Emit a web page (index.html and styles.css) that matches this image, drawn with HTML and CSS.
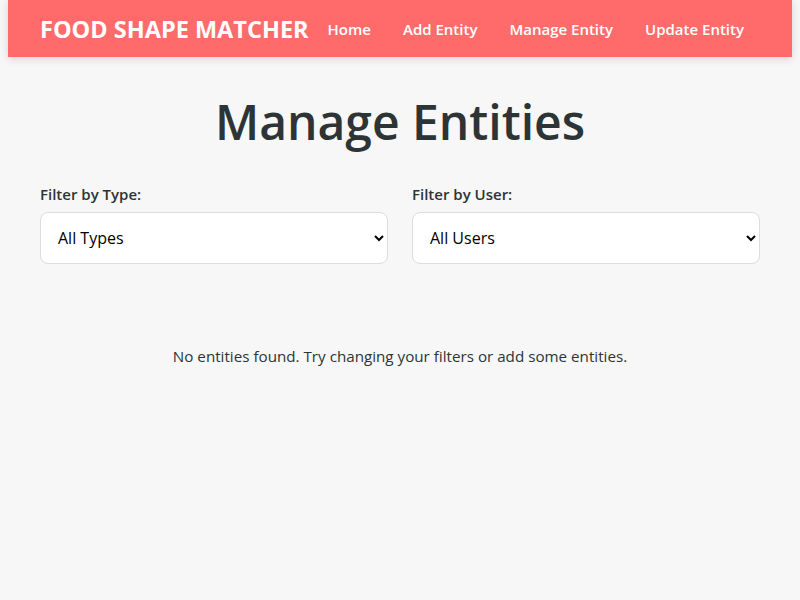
FILE: index.html
```html
<!DOCTYPE html>
<html lang="en">
<head>
<meta charset="utf-8">
<title>Food Shape Matcher</title>
<link rel="stylesheet" href="styles.css">
</head>
<body>
<div class="page">
  <header class="topbar">
    <div class="logo">FOOD SHAPE MATCHER</div>
    <nav class="nav">
      <a href="#" class="nav-link">Home</a>
      <a href="#" class="nav-link">Add Entity</a>
      <a href="#" class="nav-link">Manage Entity</a>
      <a href="#" class="nav-link">Update Entity</a>
    </nav>
  </header>
  <main class="content">
    <h1 class="title">Manage Entities</h1>
    <div class="filters">
      <div class="filter">
        <label class="filter-label" for="type">Filter by Type:</label>
        <select id="type" class="filter-select">
          <option>All Types</option>
        </select>
      </div>
      <div class="filter">
        <label class="filter-label" for="user">Filter by User:</label>
        <select id="user" class="filter-select">
          <option>All Users</option>
        </select>
      </div>
    </div>
    <p class="empty">No entities found. Try changing your filters or add some entities.</p>
  </main>
</div>
</body>
</html>
```
FILE: styles.css
```css
html, body {
  margin: 0;
  padding: 0;
  background: #f7f7f7;
}
body {
  font-family: "Open Sans", "Noto Sans", sans-serif;
  color: #2d3436;
}
.page {
  padding: 0 8px;
}
.topbar {
  background: #ff6b6b;
  height: 57px;
  box-sizing: border-box;
  padding: 0 32px;
  display: flex;
  align-items: center;
  justify-content: space-between;
  box-shadow: 0 2px 8px rgba(0, 0, 0, 0.15);
  white-space: nowrap;
}
.logo {
  color: #fff;
  font-weight: 700;
  font-size: 23.5px;
  flex-shrink: 0;
}
.nav {
  display: flex;
  flex-shrink: 0;
}
.nav-link {
  color: #fff;
  text-decoration: none;
  font-weight: 600;
  font-size: 15px;
  padding: 8px 16px;
}
.content {
  padding: 0 32px;
}
.title {
  text-align: center;
  font-size: 48px;
  font-weight: 600;
  margin: 32px 0 30px;
  color: #2d3436;
}
.filters {
  display: grid;
  grid-template-columns: 1fr 1fr;
  gap: 24px;
}
.filter {
  display: flex;
  flex-direction: column;
}
.filter-label {
  font-weight: 600;
  font-size: 15px;
  margin-bottom: 8px;
  color: #2d3436;
}
.filter-select {
  font-family: inherit;
  font-size: 16px;
  padding: 13px 16px 13px 13px;
  border: 1px solid #dddddd;
  border-radius: 8px;
  background: #fff;
  color: #000;
}
.empty {
  text-align: center;
  margin: 82px 0 0;
  font-size: 15.2px;
  color: #2d3436;
}
```
